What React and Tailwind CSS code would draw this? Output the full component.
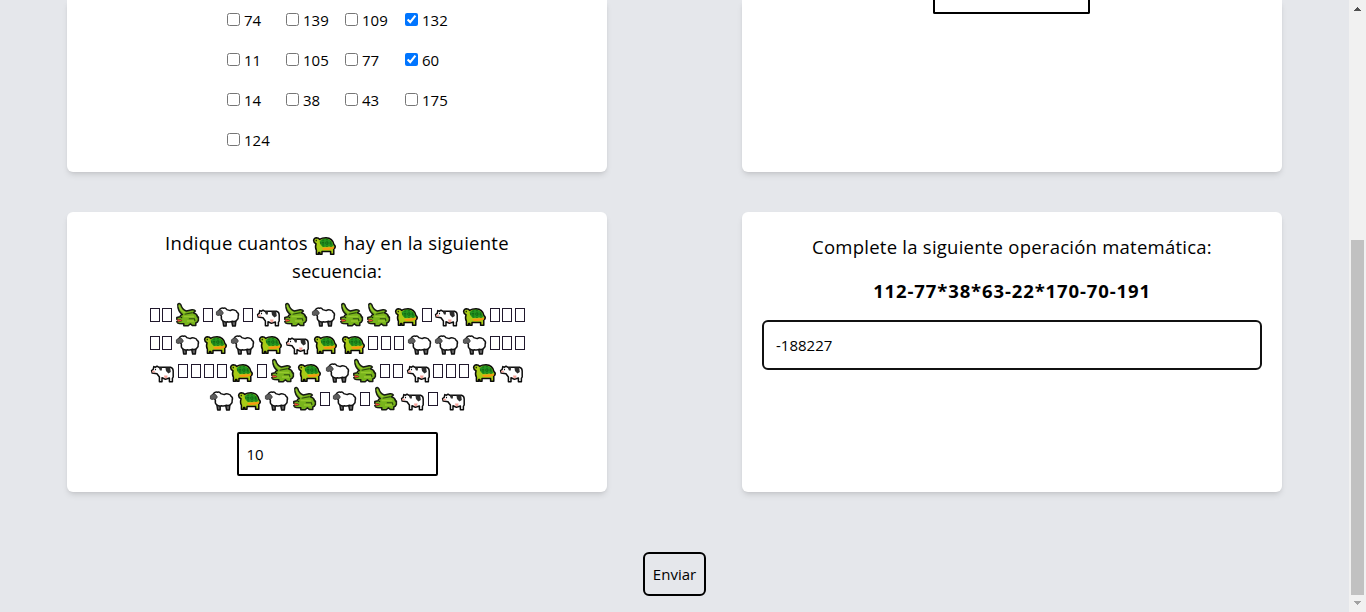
import React from "react";

const icon = "block h-[28px] w-[27.6px] shrink-0 overflow-visible";

function Turtle() {
  return (
    <svg className={icon} viewBox="0 0 27.6 28">
      <path d="M2.6 10.4Q3 7.8 5.4 7.7Q7.6 7.7 8.6 9.4Q11 7.8 15 7.8Q21.6 8 23 14.6Q25 16.2 23.8 18.2L22.8 19V24.2H19.6V21.4H11V24.2H8.8V22.4H7.6V24.2H5.4V20.2Q3.9 18 5 13.8Q2.7 13 2.6 10.4Z" fill="#a9cc16" stroke="#0a0a0a" strokeWidth="1.5" strokeLinejoin="round" />
      <path d="M8.6 11Q11 8.7 15 8.6Q20.9 9 22.4 16.2L12 17Q8.8 15 8.6 11Z" fill="#23951f" />
      <path d="M12 9.4V17M16 8.8V17M20 11V17M9 13H21.5" stroke="#0b5511" strokeWidth=".9" strokeDasharray="1.4 1" fill="none" />
      <path d="M11 18L16 17.4L23 17V18.4L18 20H12.6Z" fill="#f59a12" />
      <rect x="4.6" y="9.8" width="1.3" height="1.5" fill="#17210a" />
    </svg>
  );
}

function Croc() {
  return (
    <svg className={icon} viewBox="0 0 27.6 28">
      <path d="M3.8 3.2Q5.4 1.8 6.8 3.6Q8.2 8.6 12.4 10L18 8.7Q20.6 8.4 21.4 10L19.4 11.8Q23 12.6 23.6 16H24.4V19.4Q23.6 21.4 21.8 22V24.6H18.6L16.4 22.8L14.2 24.8H9.8V22.8L5.2 22.6Q3.2 22.2 2.8 20.6L7.4 19.6L2.8 18.2L2.8 16.4L6 15.8Q6.2 14 8.4 13.6Q3.6 10 3.8 3.2Z" fill="#78b41c" stroke="#171b13" strokeWidth="1.5" strokeLinejoin="round" />
      <path d="M5 4.4Q6 9.4 11.4 12M9.6 15.6H20M13 20H20" stroke="#95c82c" strokeWidth="1.5" fill="none" />
      <path d="M10.6 13.2L18.6 11.6M14.8 17.8H20.4L21 20" stroke="#2d4d0e" strokeWidth="1.1" fill="none" />
      <path d="M3.4 18L8.6 19.5L3.8 20.8" fill="#ef5030" />
      <rect x="6.8" y="15.8" width="1.4" height="1.4" fill="#152112" />
    </svg>
  );
}

function Sheep() {
  return (
    <svg className={icon} viewBox="0 0 27.6 28">
      <path d="M8.8 19.6L9.6 25H12.2V21M17.6 20L18.6 25H21.4L22 19" fill="#666" stroke="#111" strokeWidth="1.4" strokeLinejoin="round" />
      <path d="M5.8 8.2Q7.4 6.4 9.6 7.2Q11.4 6.4 12.8 8.6L16.2 9.6Q18.4 8 20.6 9.2Q22.4 9.2 23 11.2Q25.2 12.6 24.2 15.2Q24.6 17.8 22.8 19.2Q21 21.2 18.6 20.2Q16 21.6 13.4 20.8Q10.6 21.6 8.8 19.8Q6.8 18.6 7.4 15.4L6.4 13L4 12Z" fill="#fff" stroke="#111" strokeWidth="1.5" strokeLinejoin="round" />
      <path d="M5.2 8.8L2.4 10.8L2.4 13.8Q3.6 15 5.4 14.2L7.4 14.6L9.4 12L7.6 9.4Z" fill="#5e5e5e" stroke="#222" strokeWidth=".7" />
    </svg>
  );
}

function Cow() {
  return (
    <svg className={icon} viewBox="0 0 27.6 28">
      <path d="M4.8 9.6L6.6 10.2L8 9.2L9.6 10.2H21.6Q24.2 11 24.2 14V20L23.4 21.4V24.8H20.4V21L16.4 22.2L13 20.8V24.8H10.4V20L8 16.8L3.2 16L2.6 13.6L4.2 12.4Z" fill="#fff" stroke="#0c0c0c" strokeWidth="1.5" strokeLinejoin="round" />
      <path d="M9.6 10.6H13L12.8 13.4L11 13.6ZM16.4 10.6H21.2L21.8 15L19.4 16.4L17 14Z" fill="#2c2c2c" />
      <path d="M3 13.7H5.8V15.5H3.2ZM15 18.6H18.6L18 21.2H15.6Z" fill="#f6a49b" />
      <path d="M6.5 11.8V13.2" stroke="#111" strokeWidth="1.1" />
    </svg>
  );
}

function Unknown() {
  return (
    <span className="block h-[28px] w-[12.8px] shrink-0 pl-[1.2px] pt-[7px]">
      <span className="block h-[14px] w-[10px] border border-[#20182c]" />
    </span>
  );
}

const glyphs = { G: Turtle, C: Croc, S: Sheep, W: Cow, "-": Unknown };
const sequence = ["--C-S-WCSCCG-WG---", "--SGSGWGG---SSS---", "W----G-CGSC--W---GW", "SGSC-S-CW-W"];
const options = [74, 139, 109, 132, 11, 105, 77, 60, 14, 38, 43, 175, 124];

function Card({ className, children }) {
  return <section className={"w-[540px] rounded-md bg-white shadow-md " + className}>{children}</section>;
}

function ScrollBar() {
  return (
    <aside className="flex h-full w-[17px] shrink-0 flex-col items-center bg-[#f1f1f1]">
      <svg className="h-[17px] w-[17px]" viewBox="0 0 17 17" shapeRendering="crispEdges">
        <path d="M8 7h1v1h1v1h1v1h1v1H5v-1h1V9h1V8h1z" fill="#505050" />
      </svg>
      <div className="mt-[223px] h-[355px] w-[13px] bg-[#c1c1c1]" />
      <svg className="h-[17px] w-[17px]" viewBox="0 0 17 17" shapeRendering="crispEdges">
        <path d="M5 6h7v1h-1v1h-1v1H9v1H8V9H7V8H6V7H5z" fill="#a3a3a3" />
      </svg>
    </aside>
  );
}

export default function App() {
  return (
    <div className="flex h-[612px] w-[1366px] overflow-hidden bg-gray-200 font-['Open_Sans','Noto_Sans',sans-serif] text-[15px] text-black">
      <main className="flex min-w-0 flex-1 flex-col items-center">
        <div className="grid grid-cols-[540px_540px] gap-x-[135px] gap-y-[40px]">
          <Card className="h-[172px] rounded-t-none pl-[160px]">
            <div className="grid w-[238px] grid-cols-[59px_59px_60px_60px] auto-rows-[40px]">
              {options.map((n) => (
                <label key={n} className="flex h-[40px] items-center gap-[4px] leading-[40px]">
                  <input type="checkbox" defaultChecked={n === 132 || n === 60} className="m-0 mb-[1px] h-[13px] w-[13px]" />
                  <span>{n}</span>
                </label>
              ))}
            </div>
          </Card>
          <Card className="flex h-[172px] justify-center rounded-t-none pr-[2px]">
            <div className="h-[14px] w-[157px] rounded-b-[2px] border-2 border-t-0 border-black" />
          </Card>

          <Card className="flex h-[280px] flex-col items-center pt-[17px]">
            <h2 className="flex h-[28px] items-center text-[18.5px] leading-[28px] tracking-[0.27px]">
              <span>Indique cuantos</span>
              <span className="ml-[3px] mr-[5px] mt-[1px]"><Turtle /></span>
              <span>hay en la siguiente</span>
            </h2>
            <h2 className="text-[18.5px] leading-[28px]">secuencia:</h2>
            <div className="mt-[16px] flex flex-col items-center pl-[1.2px]">
              {sequence.map((row) => (
                <div key={row} className="flex h-[28px]">
                  {[...row].map((c, i) => {
                    const Glyph = glyphs[c];
                    return <Glyph key={i} />;
                  })}
                </div>
              ))}
            </div>
            <input defaultValue="10" className="mt-[19px] h-[44px] w-[201px] rounded-[2px] border-2 border-black px-[8px]" />
          </Card>

          <Card className="flex h-[280px] flex-col items-center px-[20px] pt-[21px]">
            <h2 className="text-[18.5px] leading-[28px] tracking-[0.24px]">Complete la siguiente operación matemática:</h2>
            <p className="mt-[16px] text-[18.5px] font-bold leading-[28px] tracking-[0.87px]">112-77*38*63-22*170-70-191</p>
            <input defaultValue="-188227" className="mt-[15px] h-[50px] w-[500px] rounded-md border-2 border-[#111] px-[12px]" />
          </Card>
        </div>
        <button className="mt-[60px] h-[44px] w-[63px] rounded-md border-2 border-black text-[15px]">Enviar</button>
      </main>
      <ScrollBar />
    </div>
  );
}
